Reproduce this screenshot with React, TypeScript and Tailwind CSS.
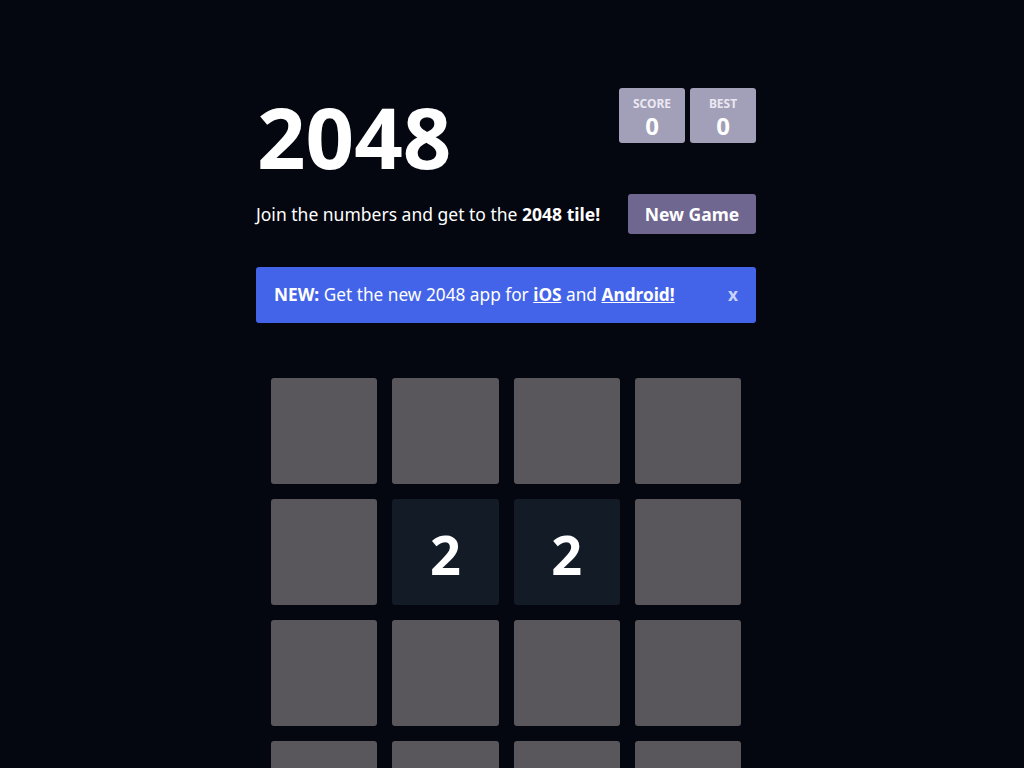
const board = [
  [0, 0, 0, 0],
  [0, 2, 2, 0],
  [0, 0, 0, 0],
  [0, 0, 0, 0],
];

function ScoreBox({ label, value }: { label: string; value: number }) {
  return (
    <div className="w-[66px] h-[55px] bg-[#a29fb8] rounded-[3px] flex flex-col items-center pt-[10px]">
      <span className="text-[12px] leading-[12px] font-bold uppercase text-[#ebe8f2]">{label}</span>
      <span className="text-[24px] leading-[24px] font-bold text-white mt-[4px]">{value}</span>
    </div>
  );
}

export default function App() {
  return (
    <div
      className="min-h-screen bg-[#040610] text-white"
      style={{ fontFamily: '"Noto Sans", "Open Sans", sans-serif' }}
    >
      <div className="w-[500px] ml-[256px] pt-[88px]">
        <div className="flex justify-between items-start">
          <h1 className="text-[85px] leading-[86px] font-bold mt-[5px] ml-[1px]">2048</h1>
          <div className="flex gap-[5px]">
            <ScoreBox label="Score" value={0} />
            <ScoreBox label="Best" value={0} />
          </div>
        </div>

        <div className="flex justify-between items-center mt-[15px]">
          <p className="text-[17.5px]">
            Join the numbers and get to the <strong>2048 tile!</strong>
          </p>
          <button className="w-[128px] h-[40px] bg-[#6f6790] rounded-[3px] text-[17.5px] font-bold text-white">
            New Game
          </button>
        </div>

        <div className="mt-[33px] h-[56px] bg-[#4364e8] rounded-[3px] flex items-center justify-between pl-[18px] pr-[18px] text-[17.25px]">
          <span>
            <strong>NEW:</strong> Get the new 2048 app for{" "}
            <a className="font-bold underline">iOS</a> and{" "}
            <a className="font-bold underline">Android!</a>
          </span>
          <span className="text-[#c9d3fa] font-bold">x</span>
        </div>

        <div className="mt-[40px] p-[15px] rounded-[6px] grid grid-cols-4 gap-[15px]">
          {board.flat().map((v, i) => (
            <div
              key={i}
              className={
                v
                  ? "h-[106px] rounded-[3px] bg-[#121b26] flex items-center justify-center text-[54px] font-bold text-white pt-[4px]"
                  : "h-[106px] rounded-[3px] bg-[#59575b]"
              }
            >
              {v ? v : null}
            </div>
          ))}
        </div>
      </div>
    </div>
  );
}
